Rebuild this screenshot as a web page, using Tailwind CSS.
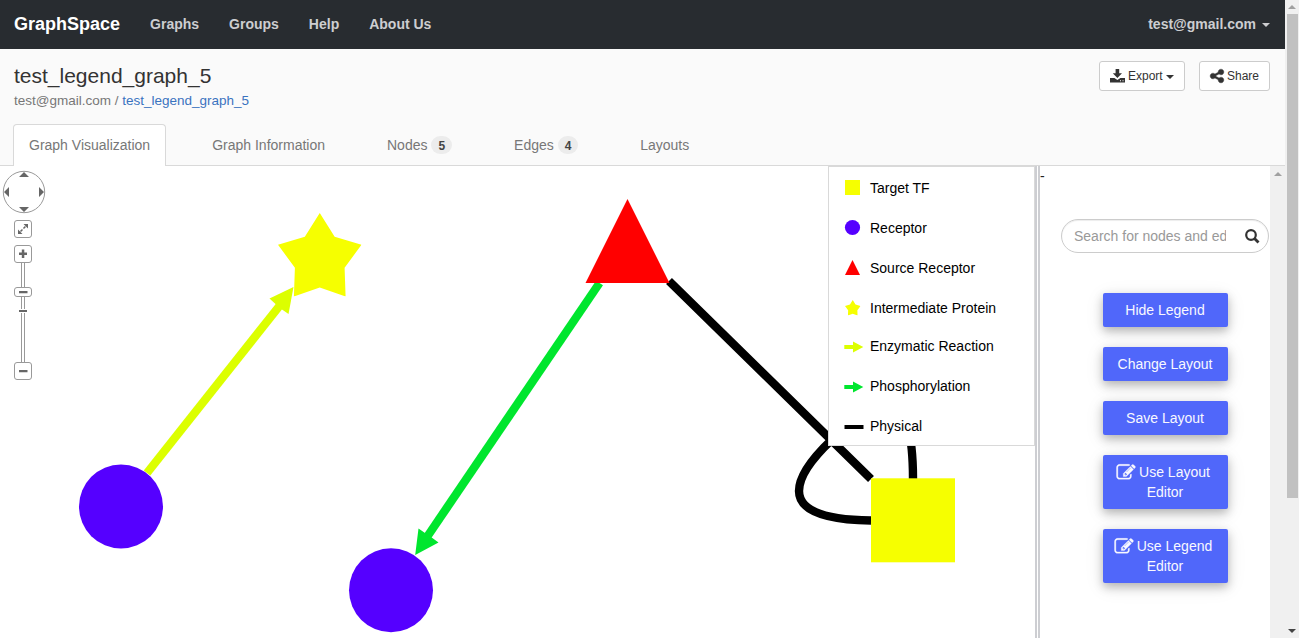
<!DOCTYPE html>
<html lang="en">
<head>
<meta charset="utf-8">
<title>GraphSpace</title>
<script src="https://cdn.jsdelivr.net/npm/@tailwindcss/browser@4"></script>
</head>
<body class="flex h-[638px] w-[1299px] overflow-hidden bg-white font-['Liberation_Sans',sans-serif] text-sm leading-5 text-[#333]">
<svg class="hidden">
  <symbol id="pencil" viewBox="0 0 1792 1792"><path fill="currentColor" stroke="currentColor" stroke-width="30" d="M888 1184l116-116-152-152-116 116v56h96v96h56zm440-720q-16-16-33 1l-350 350q-17 17-1 33t33-1l350-350q17-17 1-33zm80 594v190q0 119-84.5 203.5t-203.5 84.5h-832q-119 0-203.5-84.5t-84.5-203.5v-832q0-119 84.5-203.5t203.5-84.5h832q63 0 117 25 15 7 18 23 3 17-9 29l-49 49q-14 14-32 8-23-6-45-6h-832q-66 0-113 47t-47 113v832q0 66 47 113t113 47h832q66 0 113-47t47-113v-126q0-13 9-22l64-64q15-15 35-7t20 29zm-96-738l288 288-672 672h-288v-288zm444 132l-92 92-288-288 92-92q28-28 68-28t68 28l152 152q28 28 28 68t-28 68z"/></symbol>
  <symbol id="star" viewBox="0 0 84 84"><path d="M42 0L57 24L84 32L67 55L68 84L42 75L16 84L17 55L0 32L27 24Z"/></symbol>
</svg>
<div class="flex w-[1285px] flex-col">
  <header class="flex h-[49px] shrink-0 items-center bg-[#282c30] pr-[15px] pb-[2px] pl-[14px] font-bold text-[#cdced0]">
    <span class="mr-[30px] text-lg leading-5 text-white">GraphSpace</span>
    <nav class="flex gap-[30px]"><span>Graphs</span><span>Groups</span><span>Help</span><span>About Us</span></nav>
    <span class="ml-auto">test@gmail.com</span>
    <svg class="mt-[3px] ml-[6px] h-1 w-2" viewBox="0 0 8 4"><path d="M0 0H8L4 4Z" fill="#cdced0"/></svg>
  </header>
  <section class="flex h-[75px] shrink-0 justify-between bg-[#fafafa] pr-[15px] pl-[14px]">
    <div class="pt-[15px]">
      <h1 class="h-6 text-[21px] leading-6">test_legend_graph_5</h1>
      <p class="pt-[3px] text-[13.5px] leading-5 text-[#777]">test@gmail.com / <span class="text-[#3a73bf]">test_legend_graph_5</span></p>
    </div>
    <div class="flex gap-[14px] pt-3 text-xs text-[#333]">
      <button class="flex h-[30px] w-[86px] items-center rounded-[3px] border border-[#ccc] bg-white pl-[10px]">
        <svg class="mr-[3px] h-[14px] w-[15px]" viewBox="0 0 15 14"><path fill="#333" d="M5.600 0H9.200V4.300H12L7.400 9L2.800 4.300H5.600ZM0 9H4.400L7.400 11L10.400 9H15V13.500H0Z"/><path fill="#fff" d="M10 11.300H11V12.300H10ZM12.500 11.300H13.500V12.300H12.500Z"/></svg>
        <span>Export</span>
        <svg class="mt-[2px] ml-[3px] h-1 w-2" viewBox="0 0 8 4"><path d="M0 0H8L4 4Z" fill="#333"/></svg>
      </button>
      <button class="flex h-[30px] w-[71px] items-center rounded-[3px] border border-[#ccc] bg-white pl-[9px]">
        <svg class="mr-[2px] h-[16px] w-[16px]" viewBox="0 0 1792 1792"><path fill="#333" stroke="#333" stroke-width="40" d="M1344 1024q133 0 226.5 93.5t93.5 226.5-93.5 226.5-226.5 93.5-226.5-93.5-93.5-226.5q0-12 2-34l-360-180q-92 86-218 86-133 0-226.5-93.5t-93.5-226.5 93.5-226.5 226.5-93.5q126 0 218 86l360-180q-2-22-2-34 0-133 93.5-226.5t226.5-93.5 226.5 93.5 93.5 226.5-93.5 226.5-226.5 93.5q-126 0-218-86l-360 180q2 22 2 34t-2 34l360 180q92-86 218-86z"/></svg>
        <span>Share</span>
      </button>
    </div>
  </section>
  <div class="flex h-[42px] shrink-0 gap-[30px] border-b border-[#d9d9d9] bg-[#fafafa] pl-[13px] text-[#777]">
    <div class="-mb-px h-[42px] rounded-t border border-b-0 border-[#d9d9d9] bg-white px-[15px] pt-[10px]">Graph Visualization</div>
    <div class="px-4 pt-[11px]">Graph Information</div>
    <div class="flex px-4 pt-[11px]">Nodes<span class="mt-[1px] ml-1 h-[18px] rounded-full bg-[#ececec] px-[7px] text-xs leading-[20px] font-bold text-[#444]">5</span></div>
    <div class="-ml-[0.1px] flex px-4 pt-[11px]">Edges<span class="mt-[1px] ml-1 h-[18px] rounded-full bg-[#ececec] px-[7px] text-xs leading-[20px] font-bold text-[#444]">4</span></div>
    <div class="-ml-[0.3px] px-4 pt-[11px]">Layouts</div>
  </div>
  <main class="flex h-[472px]">
    <div class="relative h-[472px] w-[1035px] overflow-hidden">
      <svg class="block h-[472px] w-[1035px]" viewBox="0 166 1035 472">
        <g fill="none" stroke-width="8.4">
          <path d="M147 473L281 304" stroke="#dcff00"/>
          <path d="M599.500 283L427 537" stroke="#00e62e"/>
          <path d="M669 281L871 479M871 520.500Q799 519.500 799 491Q799 471 831 440.500Q872 402 890 402Q913 410 913 479" stroke="#000"/>
        </g>
        <path d="M293.500 287L269.500 298.500L275.500 304L282 309.500L288.500 314Z" fill="#dcff00"/>
        <path d="M415.200 555L418.500 528.500L425 533L431 537L438.500 542.500Z" fill="#00e62e"/>
        <use href="#star" x="278" y="213" width="83.500" height="83.500" fill="#f6ff00"/>
        <path d="M627.500 199L669.500 283H585.500Z" fill="#f00"/>
        <circle cx="121" cy="506.500" r="42" fill="#5500ff"/>
        <circle cx="391" cy="590.300" r="42" fill="#5500ff"/>
        <rect x="871" y="478.300" width="84" height="84" fill="#f6ff00"/>
        <g fill="#fff" stroke="#999">
          <circle cx="24" cy="192" r="20.700"/>
          <rect x="14.500" y="220.500" width="17" height="17" rx="2.500"/>
          <path d="M21.500 262V363M24.500 262V363" fill="none"/>
          <rect x="14.500" y="245.500" width="17" height="17" rx="2.500"/>
          <rect x="14.500" y="287.500" width="17" height="9" rx="2.500"/>
          <rect x="14.500" y="362.500" width="17" height="17" rx="2.500"/>
        </g>
        <g fill="#666">
          <path d="M24 172L29 177H19ZM24 212L29 207H19ZM4 192L9 187V197ZM44 192L39 187V197Z"/>
          <path d="M28 224V228.500L23.500 224ZM18 234V229.500L22.500 234Z"/>
          <path d="M19 252.500H27V255H19ZM21.800 249.500H24.300V258H21.800ZM19 291H27.500V293.300H19ZM19 370H27.500V372.300H19Z"/>
          <path d="M19 309H27V313H19Z" fill="#fff"/><path d="M19 310H27V312H19Z"/>
        </g>
        <path d="M20.500 231.500L25.500 226.500" stroke="#666" stroke-width="1.500" stroke-dasharray="2.800 1.400" fill="none"/>
      </svg>
      <aside class="absolute top-0 left-[828px] h-[280px] w-[207px] border border-[#d9d9d9] bg-white pt-[11px] pl-[15px] text-black">
        <div class="flex h-10 gap-[7px]"><svg class="h-5 w-[19px]" viewBox="0 0 19 20"><rect x="1" y="2" width="15" height="15" fill="#f6ff00"/></svg><span>Target TF</span></div>
        <div class="flex h-10 gap-[7px]"><svg class="h-5 w-[19px]" viewBox="0 0 19 20"><circle cx="8.500" cy="9.500" r="7.600" fill="#5500ff"/></svg><span>Receptor</span></div>
        <div class="flex h-10 gap-[7px]"><svg class="h-5 w-[19px]" viewBox="0 0 19 20"><path d="M8.500 2L16 17H1Z" fill="#f00"/></svg><span>Source Receptor</span></div>
        <div class="flex h-[38px] gap-[7px]"><svg class="h-5 w-[19px]" viewBox="0 0 19 20"><use href="#star" x="1" y="2" width="15.500" height="15.500" fill="#f6ff00"/></svg><span>Intermediate Protein</span></div>
        <div class="flex h-10 gap-[7px]"><svg class="h-5 w-[19px] overflow-visible" viewBox="0 0 19 20"><path d="M0.300 9H9V5.500L19.300 11L9 16.500V13H0.300Z" fill="#dcff00"/></svg><span>Enzymatic Reaction</span></div>
        <div class="flex h-10 gap-[7px]"><svg class="h-5 w-[19px] overflow-visible" viewBox="0 0 19 20"><path d="M0.300 9H9V5.500L19.300 11L9 16.500V13H0.300Z" fill="#00e62e"/></svg><span>Phosphorylation</span></div>
        <div class="flex gap-[7px]"><svg class="h-5 w-[19px] overflow-visible" viewBox="0 0 19 20"><path d="M0.500 9H19.500V13H0.500Z"/></svg><span>Physical</span></div>
      </aside>
    </div>
    <div class="h-full w-[5px] border-r-2 border-l-2 border-[#cdced2]"></div>
    <div class="h-full w-[230px] overflow-hidden">
      <div class="h-[53px] text-[#222]">-</div>
      <div class="ml-[21px] flex h-[34px] w-[208px] items-center rounded-[17px] border border-[#ccc] pl-3 text-[#999] shadow-[inset_0_1px_1px_rgba(0,0,0,0.075)]">
        <span class="w-[152px] overflow-hidden whitespace-nowrap">Search for nodes and ed</span>
        <svg class="ml-[19px] h-[15px] w-[15px]" viewBox="0 0 15 15" fill="none" stroke="#333"><circle cx="6" cy="6" r="4.800" stroke-width="2.200"/><path d="M9.500 9.500L13.500 13.500" stroke-width="2.800"/></svg>
      </div>
      <div class="mt-10 ml-[63px] flex w-[125px] flex-col gap-5 text-center text-[#f8f8ff]">
        <button class="h-[34px] rounded-[2px] bg-[#5067fa] pr-px shadow-[0_4px_10px_rgba(0,0,0,0.25),0_4px_20px_rgba(0,0,0,0.09)]">Hide Legend</button>
        <button class="h-[34px] rounded-[2px] bg-[#5067fa] pr-px shadow-[0_4px_10px_rgba(0,0,0,0.25),0_4px_20px_rgba(0,0,0,0.09)]">Change Layout</button>
        <button class="h-[34px] rounded-[2px] bg-[#5067fa] pr-px shadow-[0_4px_10px_rgba(0,0,0,0.25),0_4px_20px_rgba(0,0,0,0.09)]">Save Layout</button>
        <button class="h-[54px] rounded-[2px] bg-[#5067fa] pr-px shadow-[0_4px_10px_rgba(0,0,0,0.25),0_4px_20px_rgba(0,0,0,0.09)]"><span class="mr-[4px] flex justify-center gap-[3px]"><svg class="mt-px h-[19px] w-[20px]"><use href="#pencil"/></svg>Use Layout</span>Editor</button>
        <button class="h-[54px] rounded-[2px] bg-[#5067fa] pr-px shadow-[0_4px_10px_rgba(0,0,0,0.25),0_4px_20px_rgba(0,0,0,0.09)]"><span class="mr-[4px] flex justify-center gap-[3px]"><svg class="mt-px h-[19px] w-[20px]"><use href="#pencil"/></svg>Use Legend</span>Editor</button>
      </div>
    </div>
    <div class="flex h-full w-[15px] justify-center bg-[#f0f0f0] pt-[6px]"><svg class="h-1 w-2" viewBox="0 0 8 4"><path d="M0 4H8L4 0Z" fill="#a0a0a0"/></svg></div>
  </main>
</div>
<div class="flex h-full w-[14px] flex-col items-center bg-[#f0f0f0]">
  <svg class="mt-[5px] mb-[5px] h-1 w-2 shrink-0" viewBox="0 0 8 4"><path d="M0 4H8L4 0Z" fill="#a0a0a0"/></svg>
  <div class="ml-px h-[484px] w-[11px] bg-[#c1c1c1]"></div>
  <svg class="mt-auto mb-[5px] h-1 w-2" viewBox="0 0 8 4"><path d="M0 0H8L4 4Z" fill="#444"/></svg>
</div>
</body>
</html>
